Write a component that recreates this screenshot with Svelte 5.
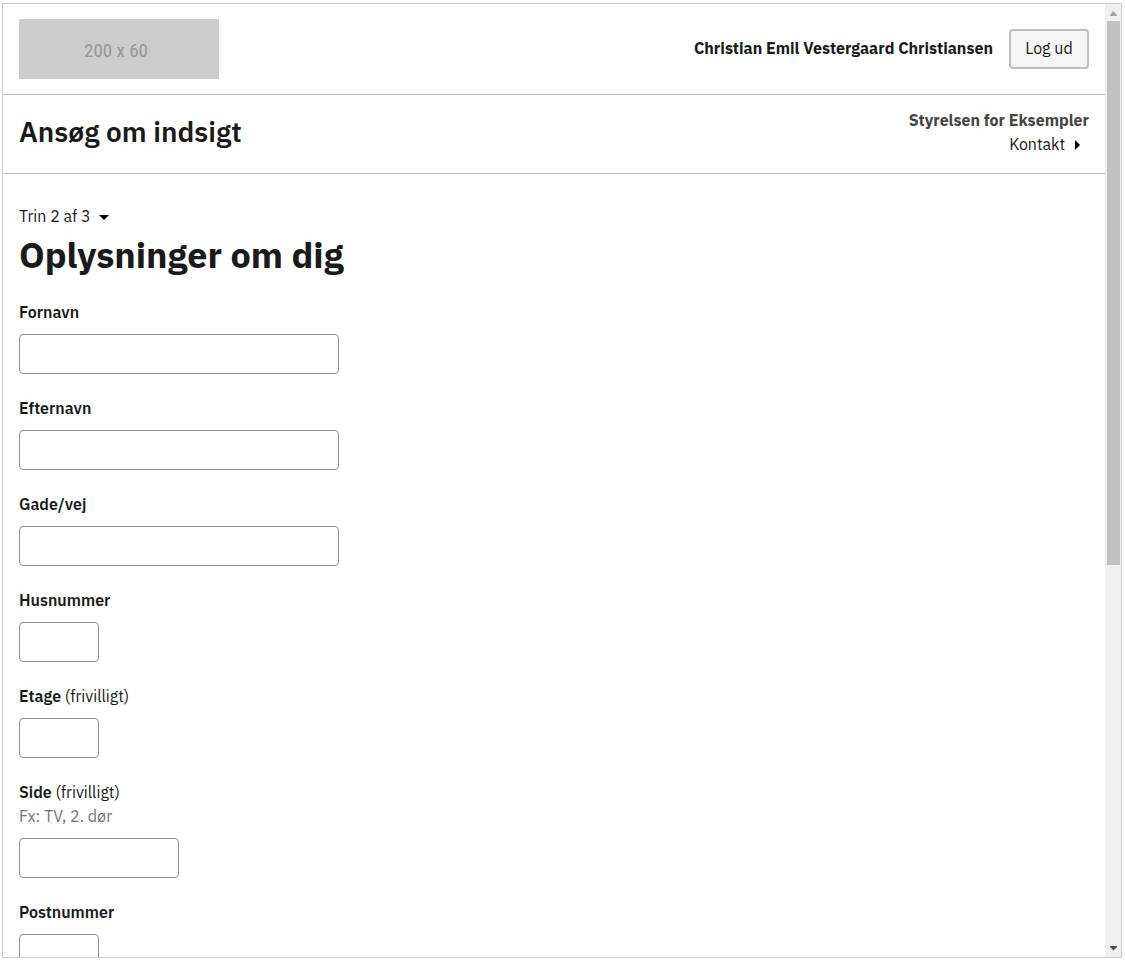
<script>
  const fields = [
    { id: 'fornavn', label: 'Fornavn', size: 'large' },
    { id: 'efternavn', label: 'Efternavn', size: 'large' },
    { id: 'gade', label: 'Gade/vej', size: 'large' },
    { id: 'husnummer', label: 'Husnummer', size: 'small' },
    { id: 'etage', label: 'Etage', size: 'small', optional: true },
    { id: 'side', label: 'Side', size: 'medium', optional: true, hint: 'Fx: TV, 2. dør' },
    { id: 'postnummer', label: 'Postnummer', size: 'small' }
  ];
</script>

<div class="frame">
  <div class="page">
    <header class="topbar">
      <svg class="logo" viewBox="0 0 200 60" role="img" aria-label="200 x 60">
        <rect width="200" height="60" fill="#cccccc" />
        <text x="97" y="38" text-anchor="middle">200 x 60</text>
      </svg>
      <div class="user">
        <strong>Christian Emil Vestergaard Christiansen</strong>
        <button class="logout" type="button">Log ud</button>
      </div>
    </header>

    <div class="solution">
      <p class="title">Ansøg om indsigt</p>
      <div class="authority">
        <strong>Styrelsen for Eksempler</strong>
        <button class="plain contact" type="button">
          Kontakt
          <svg width="6" height="12" viewBox="0 0 6 12" aria-hidden="true"><path d="M0 2L5 7L0 12Z" /></svg>
        </button>
      </div>
    </div>

    <main>
      <button class="plain step" type="button">
        Trin 2 af 3
        <svg width="10" height="8" viewBox="0 0 10 8" aria-hidden="true"><path d="M0 3H10L5 8Z" /></svg>
      </button>
      <h1>Oplysninger om dig</h1>
      <form>
        {#each fields as field (field.id)}
          <div class="field">
            <label for={field.id}>
              <b>{field.label}</b>{#if field.optional}{' '}(frivilligt){/if}
            </label>
            {#if field.hint}
              <span class="hint" id="{field.id}-hint">{field.hint}</span>
            {/if}
            <input
              id={field.id}
              class={field.size}
              type="text"
              aria-describedby={field.hint ? `${field.id}-hint` : undefined}
            />
          </div>
        {/each}
      </form>
    </main>
  </div>

  <div class="scrollbar" aria-hidden="true">
    <svg class="arrow" viewBox="0 0 16 17"><path d="M8 7L12 11V12H5V11Z" fill="#a3a3a3" /></svg>
    <div class="track"><div class="thumb"></div></div>
    <svg class="arrow" viewBox="0 0 16 17"><path d="M5 6H12V7L8.500 10.500L5 7Z" fill="#505050" /></svg>
  </div>
</div>

<style>
  :global(body) {
    background: #fff;
  }

  .frame {
    box-sizing: border-box;
    display: flex;
    height: calc(100vh - 7px);
    margin: 3px 3px 4px 2px;
    overflow: hidden;
    border: 1px solid #ccc;
    color: #1a1a1a;
    font-family: 'IBM Plex Sans', 'Noto Sans', sans-serif;
    font-size: 16px;
    line-height: 24px;
  }

  .page {
    flex: 1;
    min-width: 0;
    overflow-y: auto;
    scrollbar-width: none;
  }

  .topbar,
  .solution {
    display: flex;
    justify-content: space-between;
    border-bottom: 1px solid #bfbfbf;
  }

  .topbar {
    align-items: center;
    padding: 15px 16px;
  }

  .logo {
    width: 200px;
    height: 60px;
  }

  .logo text {
    fill: #969696;
    font-family: 'Roboto Condensed', 'Liberation Sans Narrow', Roboto, sans-serif;
    font-size: 19px;
  }

  .user {
    display: flex;
    align-items: center;
    gap: 16px;
  }

  strong {
    font-weight: 700;
  }

  b {
    font-weight: 600;
  }

  button {
    color: inherit;
    font: inherit;
    cursor: pointer;
  }

  .user strong {
    padding-bottom: 2px;
  }

  .logout {
    min-width: 80px;
    height: 40px;
    padding: 0 14px 2px;
    border: 2px solid #bfbfbf;
    border-radius: 4px;
    background: #f5f5f5;
  }

  .solution {
    padding: 13px 16px 17px;
  }

  .title {
    margin: 0;
    font-size: 28px;
    font-weight: 600;
    line-height: 48px;
  }

  .authority {
    display: flex;
    flex-direction: column;
    align-items: flex-end;
  }

  .authority strong {
    color: #454545;
  }

  .plain {
    display: flex;
    align-items: center;
    gap: 8px;
    padding: 0;
    border: 0;
    background: none;
  }

  .contact {
    gap: 10px;
    padding-right: 8px;
  }

  main {
    padding: 30px 16px;
  }

  h1 {
    margin: 0 0 18px;
    font-size: 36px;
    font-weight: 700;
    line-height: 54px;
  }

  form {
    display: flex;
    flex-direction: column;
    gap: 22px;
  }

  .field {
    display: flex;
    flex-direction: column;
    align-items: flex-start;
  }

  .hint {
    color: #757575;
  }

  input {
    box-sizing: border-box;
    height: 40px;
    max-width: 100%;
    margin: 10px 0 0;
    padding: 0 8px;
    border: 1px solid #919191;
    border-radius: 4px;
    background: #fff;
    color: inherit;
    font: inherit;
  }

  .large {
    width: 320px;
  }

  .medium {
    width: 160px;
  }

  .small {
    width: 80px;
  }

  .scrollbar {
    display: flex;
    flex: 0 0 16px;
    flex-direction: column;
    background: #f0f0f0;
  }

  .arrow {
    flex: none;
    width: 16px;
    height: 17px;
  }

  .track {
    flex: 1;
    padding: 0 1px 0 2px;
  }

  .thumb {
    height: 59.2%;
    background: #c1c1c1;
  }
</style>
